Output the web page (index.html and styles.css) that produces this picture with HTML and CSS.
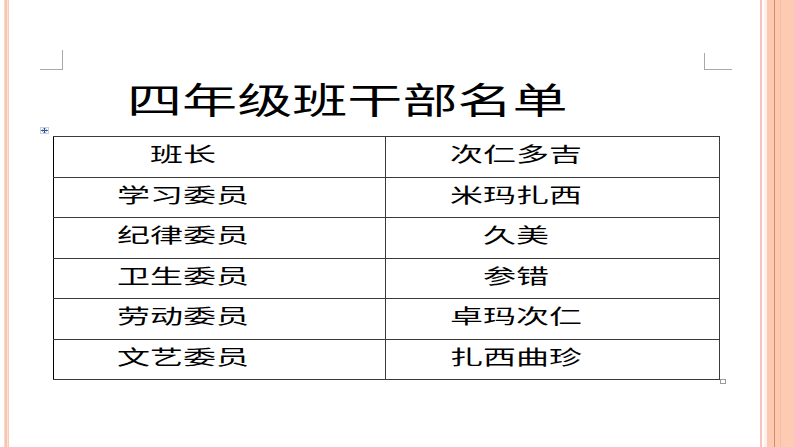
FILE: index.html
```html
<!DOCTYPE html>
<html lang="zh">
<head>
<meta charset="utf-8">
<title>四年级班干部名单</title>
<link rel="stylesheet" href="styles.css">
</head>
<body>
<div class="page">
  <div class="left-edge"><div class="left-stripe"></div></div>
  <main class="content">
    <div class="marks">
      <div class="mark mark-left"></div>
      <div class="mark mark-right"></div>
    </div>
    <h1 class="title"><span class="title-text">四年级班干部名单</span></h1>
    <div class="table-wrap">
      <span class="move-handle">
        <svg width="9" height="7" viewBox="0 0 9 7"><rect x="0.5" y="0.5" width="8" height="6" fill="#fff" stroke="#c8d0e0"/><path d="M4.5 1v5M1.5 3.5h6" stroke="#2a4fa8" stroke-width="1"/><path d="M3.5 2L4.5 1 5.5 2M3.5 5L4.5 6 5.5 5M2.5 2.5L1.5 3.5 2.5 4.5M6.5 2.5L7.5 3.5 6.5 4.5" stroke="#2a4fa8" fill="none" stroke-width="0.8"/></svg>
      </span>
      <table class="roster">
        <tr><td><span class="cell-text">班长</span></td><td><span class="cell-text">次仁多吉</span></td></tr>
        <tr><td><span class="cell-text">学习委员</span></td><td><span class="cell-text">米玛扎西</span></td></tr>
        <tr><td><span class="cell-text">纪律委员</span></td><td><span class="cell-text">久美</span></td></tr>
        <tr><td><span class="cell-text">卫生委员</span></td><td><span class="cell-text">参错</span></td></tr>
        <tr><td><span class="cell-text">劳动委员</span></td><td><span class="cell-text">卓玛次仁</span></td></tr>
        <tr><td><span class="cell-text">文艺委员</span></td><td><span class="cell-text">扎西曲珍</span></td></tr>
      </table>
      <span class="resize-handle"></span>
    </div>
  </main>
  <div class="right-edge"></div>
</div>
</body>
</html>
```
FILE: styles.css
```css
html, body {
  margin: 0;
  padding: 0;
  background: #ffffff;
}
body {
  font-family: "Noto Sans CJK SC", "Noto Sans", sans-serif;
  color: #000;
}
.page {
  display: flex;
  width: 794px;
  height: 447px;
  overflow: hidden;
}
.left-edge {
  width: 12px;
  flex: none;
  display: flex;
  padding-left: 4px;
  box-sizing: border-box;
}
.left-stripe {
  width: 5px;
  height: 100%;
  background: linear-gradient(to right,
    #fbd6c9 0, #fbd6c9 1px,
    #f6c6b0 1px, #f6c6b0 3px,
    #fbe2d5 3px, #fbe2d5 4px,
    #f7cbb6 4px, #f7cbb6 5px);
}
.right-edge {
  width: 36px;
  flex: none;
  background: linear-gradient(to right,
    #ffffff 0, #ffffff 2px,
    #f9c3bd 2px, #f9c3bd 4px,
    #ffffff 4px, #ffffff 6px,
    #fdf1ea 6px, #fdf1ea 9px,
    #fccab3 9px, #fccab3 16px,
    #d98b62 16px, #d98b62 17px,
    #fdc9b1 17px, #fdc9b1 22px,
    #f6bda3 22px, #f6bda3 23px,
    #fdcab2 23px, #fdcab2 36px);
}
.content {
  flex: 1;
  display: flex;
  flex-direction: column;
  padding-top: 50px;
}
.marks {
  display: flex;
  justify-content: space-between;
  margin: 0 26px 0 28px;
  height: 20px;
}
.mark {
  box-sizing: border-box;
}
.mark-left {
  width: 23px;
  height: 20px;
  border-right: 1px solid #a9a9a9;
  border-bottom: 1px solid #a9a9a9;
}
.mark-right {
  width: 28px;
  height: 17px;
  margin-top: 3px;
  border-left: 1px solid #a9a9a9;
  border-bottom: 1px solid #a9a9a9;
}
.title {
  margin: 8px 0 0 115px;
  font-size: 36px;
  line-height: 40px;
  font-weight: 400;
  white-space: nowrap;
}
.title-text {
  display: inline-block;
  transform: scaleX(1.53);
  transform-origin: left center;
}
.table-wrap {
  position: relative;
  margin: 18px 0 0 41px;
  width: 667px;
}
.move-handle {
  position: absolute;
  left: -13px;
  top: -9px;
  width: 9px;
  height: 7px;
  line-height: 0;
}
.resize-handle {
  position: absolute;
  right: -6px;
  bottom: -4px;
  width: 4px;
  height: 3px;
  border: 1px solid #9a9a9a;
  background: #fff;
}
.roster {
  border-collapse: collapse;
  width: 667px;
  table-layout: fixed;
}
.roster td {
  border: 1px solid #3a3a3a;
  height: 40.5px;
  padding: 0 74px 5px 0;
  text-align: center;
  font-size: 20px;
  line-height: 24px;
  white-space: nowrap;
  box-sizing: border-box;
}
.roster td:first-child {
  width: 332px;
  border-left-color: #000;
}
.cell-text {
  display: inline-block;
  transform: scaleX(1.65);
  transform-origin: center center;
}
```
